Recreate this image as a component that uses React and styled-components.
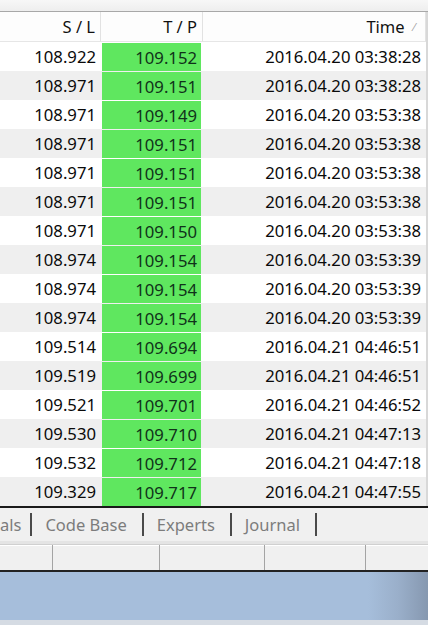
import styled, { createGlobalStyle } from "styled-components";

const GlobalStyle = createGlobalStyle`
  html, body {
    margin: 0;
    padding: 0;
    background: #ffffff;
  }
  body {
    font-family: "Noto Sans", "Open Sans", sans-serif;
  }
`;

const Page = styled.div`
  width: 428px;
  height: 625px;
  overflow: hidden;
  display: flex;
  flex-direction: column;
  background: #f0f0f0;
`;

const TopStrip = styled.div`
  height: 11px;
  background: linear-gradient(#f7f7f7, #eeeeee);
  border-bottom: 1px solid #a8a8a8;
`;

const Table = styled.div`
  display: grid;
  grid-template-columns: 101px 102px 1fr;
  border-right: 2px solid #d8d8d8;
`;

const HeadCell = styled.div`
  height: 30px;
  box-sizing: border-box;
  padding-right: ${(p) => p.$pad || 5}px;
  display: flex;
  align-items: center;
  justify-content: flex-end;
  gap: 9px;
  background: #fdfdfd;
  border-right: 1px solid #e2e2e2;
  border-bottom: 1px solid #e6e6e6;
  font-size: 16.5px;
  color: #111111;
`;

const SortMark = styled.span`
  font-size: 11px;
  color: #a0a0a0;
`;

const Cell = styled.div`
  height: 29px;
  box-sizing: border-box;
  padding-right: 5px;
  display: flex;
  align-items: center;
  justify-content: flex-end;
  background: ${(p) => (p.$odd ? "#efefef" : "#ffffff")};
  font-size: 16.7px;
  color: #0a0a0a;
`;

const GreenCell = styled(Cell)`
  padding: 1px 2px 0 1px;
  align-items: stretch;
`;

const GreenBox = styled.div`
  flex: 1;
  display: flex;
  align-items: center;
  justify-content: flex-end;
  padding-right: 4px;
  background: #5fe75f;
  color: #10321a;
`;

const Tabs = styled.div`
  height: 33px;
  display: flex;
  align-items: center;
  border-top: 2px solid #1a1a1a;
  background: #f0f0f0;
`;

const Tab = styled.div`
  display: flex;
  align-items: center;
  padding: 0 ${(p) => p.$right ?? 15}px 0 ${(p) => p.$left ?? 13}px;
  border-right: 2px solid #4a4a4a;
  height: 23px;
  font-size: 16.5px;
  color: #7c7c7c;
`;

const StatusBar = styled.div`
  height: 25px;
  display: grid;
  grid-template-columns: 53px 107px 105px 101px 1fr;
  border-top: 1px solid #d0d0d0;
  border-bottom: 2px solid #222222;
  box-shadow: inset 0 1px 0 #ffffff, 0 -3px 0 #e4e4e4;
  margin-top: 3px;
  background: #f0f0f0;
`;

const StatusPane = styled.div`
  border-right: 1px solid #a4a4a4;
  &:last-child {
    border-right: none;
  }
`;

const Desktop = styled.div`
  flex: 1;
  background: linear-gradient(
    to right,
    #a6bedb 0%,
    #a6bedb 86%,
    #9aafca 93%,
    #8698b0 100%
  );
  border-bottom: 5px solid #d5dbe3;
`;

const rows = [
  ["108.922", "109.152", "2016.04.20 03:38:28"],
  ["108.971", "109.151", "2016.04.20 03:38:28"],
  ["108.971", "109.149", "2016.04.20 03:53:38"],
  ["108.971", "109.151", "2016.04.20 03:53:38"],
  ["108.971", "109.151", "2016.04.20 03:53:38"],
  ["108.971", "109.151", "2016.04.20 03:53:38"],
  ["108.971", "109.150", "2016.04.20 03:53:38"],
  ["108.974", "109.154", "2016.04.20 03:53:39"],
  ["108.974", "109.154", "2016.04.20 03:53:39"],
  ["108.974", "109.154", "2016.04.20 03:53:39"],
  ["109.514", "109.694", "2016.04.21 04:46:51"],
  ["109.519", "109.699", "2016.04.21 04:46:51"],
  ["109.521", "109.701", "2016.04.21 04:46:52"],
  ["109.530", "109.710", "2016.04.21 04:47:13"],
  ["109.532", "109.712", "2016.04.21 04:47:18"],
  ["109.329", "109.717", "2016.04.21 04:47:55"],
];

const App = () => {
  return (
    <>
      <GlobalStyle />
      <Page>
        <TopStrip />
        <Table>
          <HeadCell>S / L</HeadCell>
          <HeadCell>T / P</HeadCell>
          <HeadCell $pad={10}>
            Time <SortMark>⁄</SortMark>
          </HeadCell>
          {rows.map(([sl, tp, time], i) => (
            <>
              <Cell key={`sl${i}`} $odd={i % 2 === 1}>
                {sl}
              </Cell>
              <GreenCell key={`tp${i}`} $odd={i % 2 === 1}>
                <GreenBox>{tp}</GreenBox>
              </GreenCell>
              <Cell key={`t${i}`} $odd={i % 2 === 1}>
                {time}
              </Cell>
            </>
          ))}
        </Table>
        <Tabs>
          <Tab $left={0} $right={9}>
            als
          </Tab>
          <Tab>Code Base</Tab>
          <Tab>Experts</Tab>
          <Tab>Journal</Tab>
        </Tabs>
        <StatusBar>
          <StatusPane />
          <StatusPane />
          <StatusPane />
          <StatusPane />
          <StatusPane />
        </StatusBar>
        <Desktop />
      </Page>
    </>
  );
};

export default App;
